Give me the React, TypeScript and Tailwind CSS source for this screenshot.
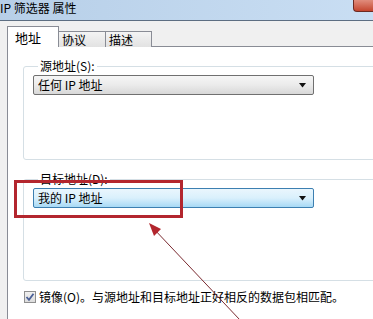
const font = { fontFamily: '"Noto Sans CJK SC", "Liberation Sans", sans-serif' };

const Arrow = () => (
	<svg width="8" height="5" viewBox="0 0 8 5" className="shrink-0">
		<path d="M0 0 H7 L3.5 4.5 Z" fill="#111" />
	</svg>
);

const Select = ({ text, active }: { text: string; active?: boolean }) => (
	<div
		className={`flex items-center justify-between h-[20px] w-[281px] rounded-[2px] border pl-[4px] pr-[6px] text-[12px] text-black ${
			active
				? "border-[#3c7fb1] bg-gradient-to-b from-[#eaf6fd] via-[#d9f0fc] to-[#a7d9f5]"
				: "border-[#707070] bg-gradient-to-b from-[#f6f6f6] via-[#ebebeb] to-[#d8d8d8]"
		}`}
	>
		<span className="leading-none">{text}</span>
		<Arrow />
	</div>
);

const Group = ({ label, text, active, height }: { label: string; text: string; active?: boolean; height: string }) => (
	<fieldset className={`w-[380px] rounded-[3px] border border-[#d5dfe5] pl-[9px] ${height}`}>
		<legend className="ml-[5px] px-[2px] text-[12px] leading-[14px] text-black">{label}</legend>
		<div className="mt-[2px]">
			<Select text={text} active={active} />
		</div>
	</fieldset>
);

export default function App() {
	return (
		<div className="relative w-[373px] h-[319px] overflow-hidden bg-[#f0f0f0]" style={font}>
			{/* title bar */}
			<div className="flex h-[21px] items-start justify-between border-b border-[#5d6e82] bg-gradient-to-r from-[#b7cfe8] to-[#c9def3]">
				<span className="ml-0 mt-[1px] text-[12px] leading-[14px] text-black">IP 筛选器 属性</span>
				<div className="h-[12px] w-[20px] rounded-bl-[4px] border border-t-0 border-r-0 border-[#6d2a22] bg-gradient-to-b from-[#e08c7c] to-[#c4452e]" />
			</div>

			{/* tabs */}
			<div className="flex items-end pl-[7px] pt-[5px]">
				<div className="relative z-10 flex h-[21px] w-[52px] items-start border border-b-0 border-[#898c95] bg-white pl-[7px] pt-[3px] text-[13px] leading-[15px] text-black">
					地址
				</div>
				<div className="flex h-[16px] w-[47px] items-start border border-b-0 border-l-0 border-[#898c95] bg-gradient-to-b from-[#f4f4f4] to-[#e2e2e2] pl-[3px] pt-[1px] text-[12px] leading-[14px] text-black">
					协议
				</div>
				<div className="flex h-[16px] w-[46px] items-start border border-b-0 border-l-0 border-[#898c95] bg-gradient-to-b from-[#f4f4f4] to-[#e2e2e2] pl-[3px] pt-[1px] text-[12px] leading-[14px] text-black">
					描述
				</div>
			</div>

			{/* panel */}
			<div className="-mt-px ml-[7px] h-[300px] w-[380px] border border-[#898c95] bg-white pl-[15px] pt-[12px]">
				<Group label="源地址(S):" text="任何 IP 地址" height="h-[101px]" />
				<div className="h-[12px]" />
				<Group label="目标地址(D):" text="我的 IP 地址" active height="h-[109px]" />
				<div className="mt-[9px] flex items-center gap-[3px] pl-[1px] text-[12px] leading-[14px] text-black">
					<div className="flex h-[12px] w-[12px] items-center justify-center border border-[#8f8f8f] bg-gradient-to-b from-[#f0f0f0] to-[#dcdcdc]">
						<svg width="10" height="10" viewBox="0 0 10 10">
							<path d="M1.5 5 L4 7.8 L8.5 1.8" fill="none" stroke="#4a5f97" strokeWidth="1.8" />
						</svg>
					</div>
					<span>镜像(O)。与源地址和目标地址正好相反的数据包相匹配。</span>
				</div>
			</div>

			{/* annotation */}
			<div className="absolute left-[14px] top-[180px] h-[38px] w-[169px] border-[3px] border-[#b3262e]" />
			<svg className="absolute left-0 top-0" width="373" height="319" viewBox="0 0 373 319">
				<line x1="153" y1="228" x2="240" y2="320" stroke="#7a2a30" strokeWidth="1" />
				<path d="M149 223 L161 229 L154 236 Z" fill="#b3262e" />
			</svg>
		</div>
	);
}
